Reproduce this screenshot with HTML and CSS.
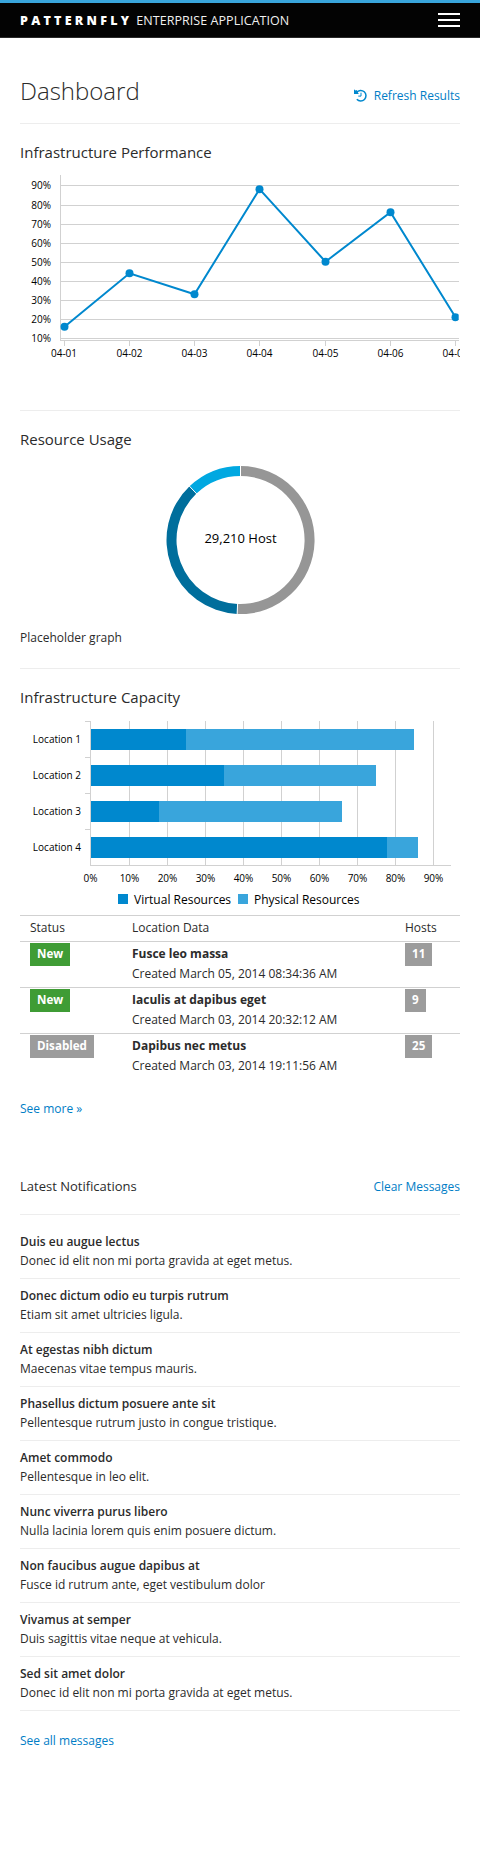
FILE: index.html
```html
<!DOCTYPE html>
<html lang="en">
<head>
<meta charset="utf-8">
<title>Dashboard</title>
<link rel="stylesheet" href="styles.css">
</head>
<body>
<header class="navbar">
  <div class="brand"><strong class="brand-name">PATTERNFLY</strong><span class="brand-sub">ENTERPRISE APPLICATION</span></div>
  <button class="toggle" aria-label="Toggle navigation"><span class="bar"></span><span class="bar"></span><span class="bar"></span></button>
</header>
<main class="page">
  <div class="page-head">
    <h1 class="page-title">Dashboard</h1>
    <a class="link refresh" href="#"><svg class="icon" viewBox="0 0 13 13"><path d="M2.600 3.300A5.300 5.300 0 1 1 2.800 10.300" fill="none" stroke="#0088ce" stroke-width="1.500"/><path d="M0 .300L1.300 1.600L2.600 .900L4.800 4.900H0Z" fill="#0088ce"/><path d="M7 3.700V7.100H4.300" fill="none" stroke="#0088ce" stroke-width="1"/></svg><span>Refresh Results</span></a>
  </div>

  <section class="panel performance">
    <h2 class="heading">Infrastructure Performance</h2>
    <svg class="chart" width="440" height="200" viewBox="20 165 440 200">
      <g class="grid">
        <path d="M60 185.5H458.500M60 205.500H458.500M60 224.500H458.500M60 243.500H458.500M60 262.500H458.500M60 281.500H458.500M60 300.500H458.500M60 319.500H458.500M60 338.500H458.500M60.500 175V341M60 340.500H458.500M64.500 340V346M129.500 340V346M194.500 340V346M259.500 340V346M325.500 340V346M390.500 340V346M455.500 340V346"/>
      </g>
      <g class="tick end">
        <text x="51" y="189">90%</text><text x="51" y="209">80%</text><text x="51" y="228">70%</text><text x="51" y="247">60%</text><text x="51" y="266">50%</text><text x="51" y="285">40%</text><text x="51" y="304">30%</text><text x="51" y="323">20%</text><text x="51" y="342">10%</text>
      </g>
      <g class="tick mid">
        <text x="64" y="357">04-01</text><text x="129.500" y="357">04-02</text><text x="194.500" y="357">04-03</text><text x="259.500" y="357">04-04</text><text x="325.500" y="357">04-05</text><text x="390.500" y="357">04-06</text><text x="455.500" y="357">04-07</text>
      </g>
      <clipPath id="plot"><rect x="56" y="165" width="402.700" height="190"/></clipPath>
      <g clip-path="url(#plot)">
        <path class="series" d="M64.500 326.700L129.500 273.300L194.500 294.200L259.500 189.200L325.500 261.700L390.500 212.200L455.500 317.200"/>
        <g class="dots"><circle cx="64.500" cy="326.700" r="4"/><circle cx="129.500" cy="273.300" r="4"/><circle cx="194.500" cy="294.200" r="4"/><circle cx="259.500" cy="189.200" r="4"/><circle cx="325.500" cy="261.700" r="4"/><circle cx="390.500" cy="212.200" r="4"/><circle cx="455.500" cy="317.200" r="4"/></g>
      </g>
    </svg>
  </section>

  <section class="panel usage">
    <h2 class="heading">Resource Usage</h2>
    <svg class="chart" width="440" height="160" viewBox="20 460 440 160">
      <path fill="#969696" d="M240.500 466A74 74 0 1 1 237.140 613.920L237.590 603.930A64 64 0 1 0 240.500 476Z"/>
      <path fill="#006e9c" d="M237.140 613.920A74 74 0 0 1 189.560 486.320L196.450 493.580A64 64 0 0 0 237.590 603.930Z"/>
      <path fill="#00a8e1" d="M189.560 486.320A74 74 0 0 1 240.500 466V476A64 64 0 0 0 196.450 493.580Z"/>
      <path class="split" d="M240.500 465V477M237.100 615L237.640 603M188.900 485.600L197.100 494.300"/>
      <text class="total" x="240.500" y="543">29,210 Host</text>
    </svg>
    <p class="note">Placeholder graph</p>
  </section>

  <section class="panel capacity">
    <h2 class="heading">Infrastructure Capacity</h2>
    <svg class="chart" width="440" height="195" viewBox="20 715 440 195">
      <g class="grid">
        <path d="M129.500 721V865M167.500 721V865M205.500 721V865M243.500 721V865M281.500 721V865M319.500 721V865M357.500 721V865M395.500 721V865M433.500 721V865M84.500 721.500H91M84.500 757.500H91M84.500 793.500H91M84.500 829.500H91M90.500 721V866M90 865.500H450.500"/>
      </g>
      <g fill="#0088ce"><path d="M91 729h95v21h-95zM91 765h133v21h-133zM91 801h68v21h-68zM91 837h296v21h-296zM118 894h10v10h-10z"/></g>
      <g fill="#39a5dc"><path d="M186 729h228v21h-228zM224 765h152v21h-152zM159 801h183v21h-183zM387 837h31v21h-31zM238 894h10v10h-10z"/></g>
      <g class="tick end"><text x="81" y="743">Location 1</text><text x="81" y="779">Location 2</text><text x="81" y="815">Location 3</text><text x="81" y="851">Location 4</text></g>
      <g class="tick mid"><text x="90.500" y="882">0%</text><text x="129.500" y="882">10%</text><text x="167.500" y="882">20%</text><text x="205.500" y="882">30%</text><text x="243.500" y="882">40%</text><text x="281.500" y="882">50%</text><text x="319.500" y="882">60%</text><text x="357.500" y="882">70%</text><text x="395.500" y="882">80%</text><text x="433.500" y="882">90%</text></g>
      <g class="legend"><text x="134" y="904">Virtual Resources</text><text x="254" y="904">Physical Resources</text></g>
    </svg>
    <table class="locations">
      <thead><tr><th class="c-status">Status</th><th class="c-data">Location Data</th><th>Hosts</th></tr></thead>
      <tbody>
        <tr><td><span class="badge ok">New</span></td><td class="entry"><strong>Fusce leo massa</strong><br>Created March 05, 2014 08:34:36 AM</td><td><span class="badge">11</span></td></tr>
        <tr><td><span class="badge ok">New</span></td><td class="entry"><strong>Iaculis at dapibus eget</strong><br>Created March 03, 2014 20:32:12 AM</td><td><span class="badge">9</span></td></tr>
        <tr><td><span class="badge">Disabled</span></td><td class="entry"><strong>Dapibus nec metus</strong><br>Created March 03, 2014 19:11:56 AM</td><td><span class="badge">25</span></td></tr>
      </tbody>
    </table>
    <a class="link more" href="#">See more »</a>
  </section>

  <section class="notifications">
    <div class="notif-head"><h2 class="notif-title">Latest Notifications</h2><a class="link clear" href="#">Clear Messages</a></div>
    <ul class="messages">
      <li><b>Duis eu augue lectus</b><span>Donec id elit non mi porta gravida at eget metus.</span></li>
      <li><b>Donec dictum odio eu turpis rutrum</b><span>Etiam sit amet ultricies ligula.</span></li>
      <li><b>At egestas nibh dictum</b><span>Maecenas vitae tempus mauris.</span></li>
      <li><b>Phasellus dictum posuere ante sit</b><span>Pellentesque rutrum justo in congue tristique.</span></li>
      <li><b>Amet commodo</b><span>Pellentesque in leo elit.</span></li>
      <li><b>Nunc viverra purus libero</b><span>Nulla lacinia lorem quis enim posuere dictum.</span></li>
      <li><b>Non faucibus augue dapibus at</b><span>Fusce id rutrum ante, eget vestibulum dolor</span></li>
      <li><b>Vivamus at semper</b><span>Duis sagittis vitae neque at vehicula.</span></li>
      <li><b>Sed sit amet dolor</b><span>Donec id elit non mi porta gravida at eget metus.</span></li>
    </ul>
    <a class="link all" href="#">See all messages</a>
  </section>
</main>
</body>
</html>
```
FILE: styles.css
```css
* { box-sizing: border-box; }
body { margin: 0; background: #fff; color: #2b2b2b; font: 12px/20px "Open Sans", sans-serif; }
h1, h2, p, ul { margin: 0; padding: 0; font-weight: 400; }
.navbar { display: flex; justify-content: space-between; align-items: center; height: 38px; padding: 0 20px; background: #030303; border-top: 3px solid #39a5dc; border-bottom: 1px solid #292929; color: #fff; }
.brand { display: flex; gap: 4px; padding-top: 1px; font-size: 12.5px; line-height: 20px; }
.brand-name { font-weight: 800; letter-spacing: 3.25px; }
.brand-sub { color: #f0f0f0; letter-spacing: .05px; }
.toggle { display: flex; flex-direction: column; gap: 4px; width: 22px; padding: 0; border: 0; background: none; }
.bar { height: 2px; background: #fff; }
.page { padding: 0 20px; }
.link { color: #007dc6; text-decoration: none; }
.page-head { display: flex; justify-content: space-between; height: 86px; padding-top: 37px; border-bottom: 1px solid #ededed; }
.page-title { font-size: 24px; line-height: 32px; font-weight: 300; }
.refresh { display: flex; align-items: center; gap: 7px; height: 20px; margin-top: 11px; }
.icon { width: 13px; height: 13px; margin-bottom: 2px; }
.heading { font-size: 15px; line-height: 20px; }
.chart { display: block; }
.panel { padding-top: 18px; }
.performance { height: 287px; border-bottom: 1px solid #ededed; }
.performance .heading { height: 23px; }
.usage { height: 258px; border-bottom: 1px solid #ededed; }
.usage .heading { height: 31px; }
.note { padding-top: 8px; }
.capacity .heading { height: 28px; }
.grid path { fill: none; stroke: #d1d1d1; stroke-width: 1; shape-rendering: crispEdges; }
.series { fill: none; stroke: #0088ce; stroke-width: 2; }
.dots { fill: #0088ce; }
.tick { font-size: 10px; fill: #000; }
.end { text-anchor: end; }
.mid { text-anchor: middle; }
.split { fill: none; stroke: #fff; stroke-width: 1; }
.total { font-size: 13px; text-anchor: middle; fill: #000; }
.legend { font-size: 12px; fill: #000; }
.locations { width: 440px; margin-top: 5px; border-collapse: separate; border-spacing: 0; table-layout: fixed; }
.locations th { height: 26px; padding: 2px 10px 3px; border-top: 1px solid #d1d1d1; text-align: left; font-weight: 500; }
.locations td { height: 46px; padding: 1px 10px 3px; border-top: 1px solid #d1d1d1; vertical-align: top; }
.locations .entry { padding-top: 2px; }
.c-status { width: 102px; }
.c-data { width: 273px; }
.badge { display: inline-block; height: 23px; padding: 0 7px; background: #9c9c9c; color: #fff; font-size: 11.6px; font-weight: 700; line-height: 22px; vertical-align: top; }
.ok { background: #3f9c35; }
.more { display: block; margin-top: 20px; }
.notifications { padding-top: 57px; }
.notif-head { display: flex; justify-content: space-between; height: 39px; border-bottom: 1px solid #ededed; }
.notif-title { font-size: 13px; }
.clear { padding-top: 1px; }
.messages { list-style: none; padding-top: 10px; }
.messages li { display: flex; flex-direction: column; height: 54px; padding-top: 7px; border-bottom: 1px solid #ededed; line-height: 19px; }
.messages b { font-weight: 600; }
.all { display: block; margin-top: 20px; }
```
